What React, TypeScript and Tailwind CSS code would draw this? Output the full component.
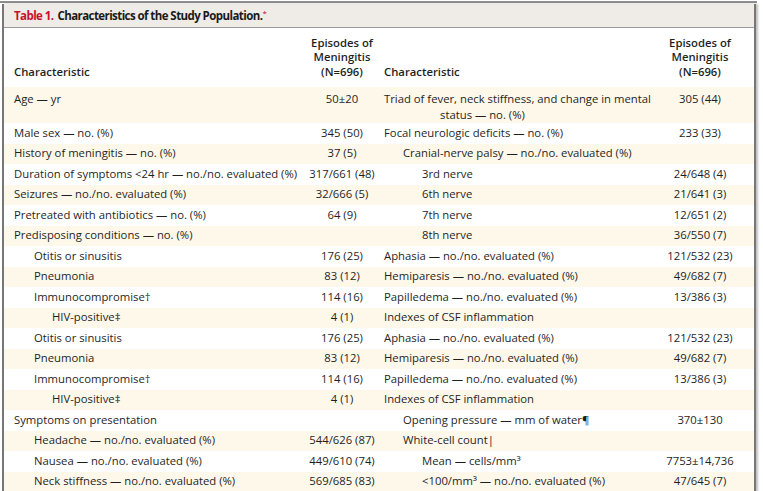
import type { ReactNode } from "react";

type Cell = { text: ReactNode; value?: string; indent?: 0 | 1 | 2 };

const rows: { left: Cell; right: Cell }[] = [
	{ left: { text: "Male sex — no. (%)", value: "345 (50)" }, right: { text: "Focal neurologic deficits — no. (%)", value: "233 (33)" } },
	{ left: { text: "History of meningitis — no. (%)", value: "37 (5)" }, right: { text: "Cranial-nerve palsy — no./no. evaluated (%)", indent: 1 } },
	{ left: { text: "Duration of symptoms <24 hr — no./no. evaluated (%)", value: "317/661 (48)" }, right: { text: "3rd nerve", value: "24/648 (4)", indent: 2 } },
	{ left: { text: "Seizures — no./no. evaluated (%)", value: "32/666 (5)" }, right: { text: "6th nerve", value: "21/641 (3)", indent: 2 } },
	{ left: { text: "Pretreated with antibiotics — no. (%)", value: "64 (9)" }, right: { text: "7th nerve", value: "12/651 (2)", indent: 2 } },
	{ left: { text: "Predisposing conditions — no. (%)" }, right: { text: "8th nerve", value: "36/550 (7)", indent: 2 } },
	{ left: { text: "Otitis or sinusitis", value: "176 (25)", indent: 1 }, right: { text: "Aphasia — no./no. evaluated (%)", value: "121/532 (23)" } },
	{ left: { text: "Pneumonia", value: "83 (12)", indent: 1 }, right: { text: "Hemiparesis — no./no. evaluated (%)", value: "49/682 (7)" } },
	{ left: { text: "Immunocompromise†", value: "114 (16)", indent: 1 }, right: { text: "Papilledema — no./no. evaluated (%)", value: "13/386 (3)" } },
	{ left: { text: "HIV-positive‡", value: "4 (1)", indent: 2 }, right: { text: "Indexes of CSF inflammation" } },
	{ left: { text: "Otitis or sinusitis", value: "176 (25)", indent: 1 }, right: { text: "Aphasia — no./no. evaluated (%)", value: "121/532 (23)" } },
	{ left: { text: "Pneumonia", value: "83 (12)", indent: 1 }, right: { text: "Hemiparesis — no./no. evaluated (%)", value: "49/682 (7)" } },
	{ left: { text: "Immunocompromise†", value: "114 (16)", indent: 1 }, right: { text: "Papilledema — no./no. evaluated (%)", value: "13/386 (3)" } },
	{ left: { text: "HIV-positive‡", value: "4 (1)", indent: 2 }, right: { text: "Indexes of CSF inflammation" } },
	{ left: { text: "Symptoms on presentation" }, right: { text: "Opening pressure — mm of water¶", value: "370±130", indent: 1 } },
	{ left: { text: "Headache — no./no. evaluated (%)", value: "544/626 (87)", indent: 1 }, right: { text: "White-cell count|", indent: 1 } },
	{ left: { text: "Nausea — no./no. evaluated (%)", value: "449/610 (74)", indent: 1 }, right: { text: "Mean — cells/mm³", value: "7753±14,736", indent: 2 } },
	{ left: { text: "Neck stiffness — no./no. evaluated (%)", value: "569/685 (83)", indent: 1 }, right: { text: "<100/mm³ — no./no. evaluated (%)", value: "47/645 (7)", indent: 2 } },
];

const leftIndent = ["pl-[10px]", "pl-[30px]", "pl-[48px]"];
const rightIndent = ["pl-[1px]", "pl-[20px]", "pl-[39px]"];

const grid = "grid grid-cols-[297px_82px_263px_108px]";

export default function App() {
	return (
		<div
			className="h-[491px] w-[763px] overflow-hidden bg-white pt-px text-[11.3px] text-[#1f1f1f]"
			style={{ fontFamily: '"Open Sans", "Liberation Sans", sans-serif' }}
		>
			<div className="h-[2px] w-[757px] bg-[#8e8e8e]" />
			<div className="ml-[2px] w-[754px] border-x-2 border-[#777] shadow-[2px_0_2px_rgba(0,0,0,0.25)]">
				<div className="mt-px flex h-[24px] items-center border-b border-[#9c9c9c] bg-[#efebe6] pl-[10px] text-[11.5px] font-bold tracking-[-0.05em]">
					<span className="text-[#c8102e]">Table 1.</span>
					<span className="ml-[4px] text-[#1a1a1a]">Characteristics of the Study Population.</span>
					<span className="-mt-[6px] text-[8px] font-normal text-[#c8102e]">*</span>
				</div>
				<div className={`${grid} h-[59px] items-end pb-[8px] font-semibold leading-[14.5px]`}>
					<div className="pl-[10px]">Characteristic</div>
					<div className="text-center">
						Episodes of
						<br />
						Meningitis
						<br />
						(N=696)
					</div>
					<div className="pl-[1px]">Characteristic</div>
					<div className="text-center">
						Episodes of
						<br />
						Meningitis
						<br />
						(N=696)
					</div>
				</div>
				<div className={`${grid} h-[36px] bg-[#fdf8ea] pt-[4px] leading-[16px]`}>
					<div className="pl-[10px]">Age — yr</div>
					<div className="text-center">50±20</div>
					<div className="whitespace-nowrap pl-[1px]">
						Triad of fever, neck stiffness, and change in mental
						<div className="pl-[56px]">status — no. (%)</div>
					</div>
					<div className="text-center">305 (44)</div>
				</div>
				{rows.map((row, i) => (
					<div
						key={i}
						className={`${grid} h-[20.5px] items-center whitespace-nowrap ${i % 2 === 1 ? "bg-[#fdf8ea]" : "bg-white"}`}
					>
						<div className={leftIndent[row.left.indent ?? 0]}>{row.left.text}</div>
						<div className="text-center">{row.left.value}</div>
						<div className={rightIndent[row.right.indent ?? 0]}>{row.right.text}</div>
						<div className="text-center">{row.right.value}</div>
					</div>
				))}
			</div>
		</div>
	);
}
